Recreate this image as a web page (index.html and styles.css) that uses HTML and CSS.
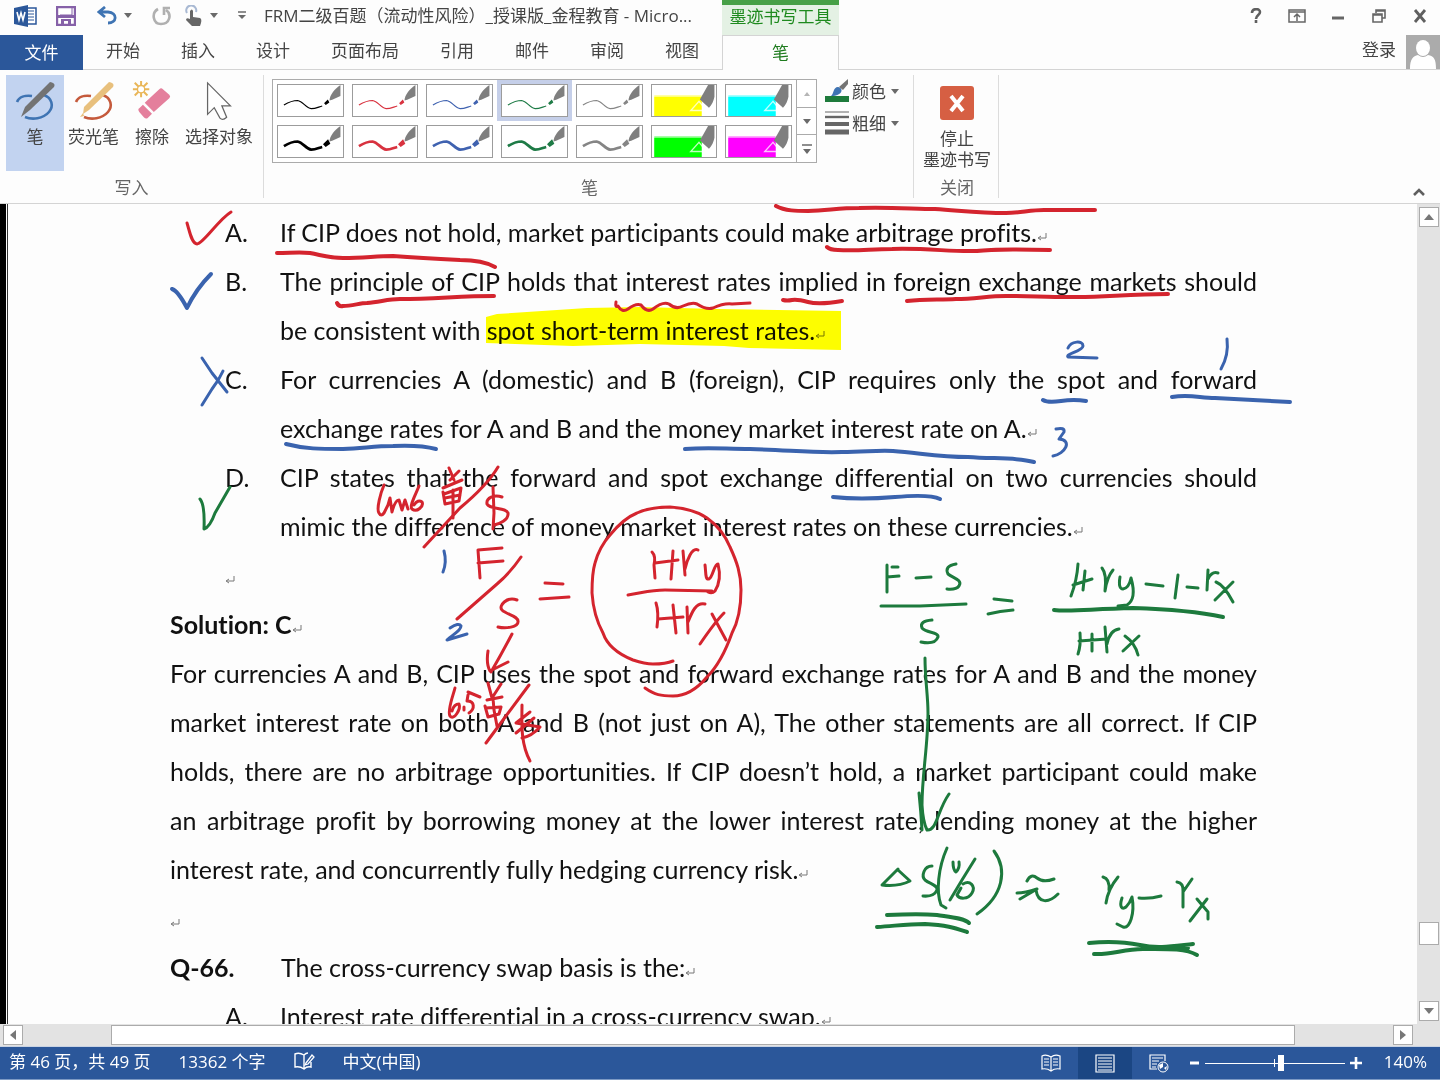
FILE: index.html
```html
<!DOCTYPE html>
<html lang="zh-CN">
<head>
    <meta charset="UTF-8">
    <meta name="viewport" content="width=device-width, initial-scale=1.0">
    <title>FRM二级百题（流动性风险）_授课版_金程教育</title>
    <link rel="stylesheet" href="styles.css">
</head>
<body>
    <!-- Símbolos compartidos -->
    <svg class="defs" aria-hidden="true">
        <symbol id="pen" viewBox="0 0 66 34">
            <path class="wave" d="M4 22C9 19 14 17 19 17C25 18 28 25 34 26C39 26 42 24 46 23"/>
            <path d="M49 20L52 17L53 19L50 21Z" fill="currentColor" stroke="currentColor"/>
            <path d="M54 17C54 11 60 4 66 0V12C62 14 58 16 54 17Z" fill="#7f7f7f"/>
        </symbol>
        <symbol id="marker" viewBox="0 0 66 34">
            <path d="M0 11H52V34H0Z" fill="currentColor" opacity=".35"/>
            <path d="M0 13H52V34H0Z" fill="currentColor"/>
            <path d="M59 0H66V13C65 18 63 22 60 25L50 16Z" fill="#7f7f7f"/>
            <path d="M49 18L40 28H54V24Z" fill="none" stroke="#fff" stroke-opacity=".75" stroke-width="1.5"/>
        </symbol>
        <symbol id="ret" viewBox="0 0 10 10">
            <path d="M9 1V6H2M4 4L1 6L4 8" fill="none" stroke="#777" stroke-width="1"/>
        </symbol>
        <symbol id="down" viewBox="0 0 8 5"><path d="M0 0H8L4 5Z" fill="#6a6a6a"/></symbol>
    </svg>

    <!-- Barra de título -->
    <header class="title-bar">
        <div class="title-left">
            <div class="quick">
                <svg class="word-logo" width="24" height="22" viewBox="0 0 24 22">
                    <path d="M13 3H22V19H13Z" fill="#fff" stroke="#2b579a" stroke-width="1.5"/>
                    <path d="M14 6H20M14 9H20M14 12H20M14 15H20" stroke="#2b579a"/>
                    <path d="M0 3L14 0V22L0 19Z" fill="#2b579a"/>
                    <path d="M3 7L5 15L7 8L9 15L11 7" fill="none" stroke="#fff" stroke-width="1.6"/>
                </svg>
                <button class="save" aria-label="保存"><svg width="20" height="20" viewBox="0 0 20 20"><path d="M1 1H19V19H1Z" fill="#fff" stroke="#8661a8" stroke-width="2.4"/><path d="M4 9H16V2" fill="none" stroke="#8661a8"/><path d="M1 9H19V12H1ZM5 13H15V19H12V15H8V19H5Z" fill="#8661a8"/></svg></button>
                <button class="undo" aria-label="撤消"><svg width="20" height="19" viewBox="0 0 20 19"><path d="M8 1L2 6L8 11M3 6H11C21 7 20 17 11 17" fill="none" stroke="#3f74b3" stroke-width="2.8"/></svg></button>
                <button class="undo-more" aria-label="撤消列表"><svg width="8" height="5"><use href="#down"/></svg></button>
                <button class="redo" aria-label="重复"><svg width="20" height="20" viewBox="0 0 20 20"><path d="M6 3C-1 7 1 18 9 18C18 18 20 8 14 4M12 9V2H18" fill="none" stroke="#b0b0b0" stroke-width="2.6"/></svg></button>
                <button class="touch" aria-label="触摸模式"><svg width="18" height="22" viewBox="0 0 18 22"><path d="M2 8A5 5 0 1 1 11 7" fill="none" stroke="#a9b9d3" stroke-width="2"/><path d="M5 6Q7 3 8 6V12L15 13Q17 14 16 18L15 21H7L1 15Q1 12 5 14Z" fill="#666"/></svg></button>
                <button class="touch-more" aria-label="模式列表"><svg width="8" height="5"><use href="#down"/></svg></button>
                <button class="customize" aria-label="自定义快速访问工具栏"><svg width="8" height="9" viewBox="0 0 8 9"><path d="M0 1H8" stroke="#6a6a6a" stroke-width="1.5"/><path d="M0 4H8L4 8Z" fill="#6a6a6a"/></svg></button>
            </div>
            <h1>FRM二级百题（流动性风险）_授课版_金程教育 - Micro...</h1>
        </div>
        <div class="context-title">墨迹书写工具</div>
        <div class="window-buttons">
            <button aria-label="帮助"><svg width="12" height="16" viewBox="0 0 12 16"><path d="M2 5C2 0 10 0 10 4C10 7 6 7 6 11M6 12V15" fill="none" stroke="#5f5f5f" stroke-width="2.6"/></svg></button>
            <button aria-label="功能区显示选项"><svg width="18" height="14" viewBox="0 0 18 14"><path d="M1 1H17V13H1ZM1 3H17M9 12V6M6 8L9 5L12 8" fill="none" stroke="#666" stroke-width="1.5"/></svg></button>
            <button aria-label="最小化"><svg width="14" height="14" viewBox="0 0 14 14"><path d="M1 9H13" stroke="#666" stroke-width="3"/></svg></button>
            <button aria-label="还原"><svg width="14" height="14" viewBox="0 0 14 14"><path d="M4 4V1H13V9H10M4 2H13M1 5H10V13H1ZM1 6H10" fill="none" stroke="#666" stroke-width="1.6"/></svg></button>
            <button aria-label="关闭"><svg width="14" height="14" viewBox="0 0 14 14"><path d="M2 1L12 13M12 1L2 13" stroke="#5f5f5f" stroke-width="2.8"/></svg></button>
        </div>
    </header>

    <!-- Pestañas -->
    <nav class="tabs">
        <div class="tabs-left">
            <button class="file-tab">文件</button>
            <button>开始</button>
            <button>插入</button>
            <button>设计</button>
            <button>页面布局</button>
            <button>引用</button>
            <button>邮件</button>
            <button>审阅</button>
            <button>视图</button>
        </div>
        <button class="pen-tab">笔</button>
        <div class="account">
            <a href="#">登录</a>
            <svg width="34" height="34" viewBox="0 0 34 34"><path d="M0 0H34V34H0Z" fill="#ababab"/><ellipse cx="17" cy="13" rx="7" ry="8" fill="#fff"/><path d="M4 34C4 24 7 21 12 20Q17 24 22 20C28 21 30 24 30 34Z" fill="#fff"/></svg>
        </div>
    </nav>

    <!-- Cinta de opciones -->
    <section class="ribbon">
        <div class="group">
            <div class="tools">
                <button class="tool active">
                    <svg width="40" height="40" viewBox="0 0 40 40"><path d="M2 21C4 16 10 14 17 15M29 14C37 17 39 25 34 31C28 38 17 39 10 36" fill="none" stroke="#3f74b3" stroke-width="2.6"/><path d="M35 1Q41 2 39 6L15 29L6 36L10 26Z" fill="#737373"/></svg>
                    笔
                </button>
                <button class="tool">
                    <svg width="40" height="40" viewBox="0 0 40 40"><path d="M2 21C4 16 10 14 17 15M29 14C37 17 39 25 34 31C28 38 17 39 10 36" fill="none" stroke="#c55a3c" stroke-width="2.6"/><path d="M35 1Q41 2 39 6L15 29L9 33L10 26Z" fill="#e8c07d"/><path d="M9 32L6 36L10 35Z" fill="#e8c07d"/></svg>
                    荧光笔
                </button>
                <button class="tool">
                    <svg width="44" height="44" viewBox="0 0 44 44"><path d="M10 0V18M1 9H19M3 2L17 16M17 2L3 16" stroke="#e9b658" stroke-width="2.2"/><circle cx="10" cy="9" r="4" fill="#fff" stroke="#e9b658" stroke-width="1.5"/><path d="M14 24L30 9Q32 7 34 9L41 15Q43 17 41 19L24 34Z" fill="#e47f9c"/><path d="M12 26L22 36L17 41Q15 42 13 40L8 34Q6 31 8 30Z" fill="#e47f9c"/></svg>
                    擦除
                </button>
                <button class="tool">
                    <svg width="28" height="42" viewBox="0 0 28 42"><path d="M2 2V35L9 28L15 39Q18 42 22 38L17 26H26Z" fill="#fff" stroke="#666" stroke-width="1.3"/></svg>
                    选择对象
                </button>
            </div>
            <div class="group-name">写入</div>
        </div>
        <div class="group">
            <div class="pens">
                <div class="gallery">
                    <div class="swatches">
                        <button class="black" aria-label="黑色细笔"><svg><use href="#pen"/></svg></button>
                        <button class="red" aria-label="红色细笔"><svg><use href="#pen"/></svg></button>
                        <button class="blue" aria-label="蓝色细笔"><svg><use href="#pen"/></svg></button>
                        <button class="green selected" aria-label="绿色细笔"><svg><use href="#pen"/></svg></button>
                        <button class="gray" aria-label="灰色细笔"><svg><use href="#pen"/></svg></button>
                        <button class="yellow" aria-label="黄色荧光笔"><svg><use href="#marker"/></svg></button>
                        <button class="cyan" aria-label="青色荧光笔"><svg><use href="#marker"/></svg></button>
                        <button class="black thick" aria-label="黑色粗笔"><svg><use href="#pen"/></svg></button>
                        <button class="red thick" aria-label="红色粗笔"><svg><use href="#pen"/></svg></button>
                        <button class="blue thick" aria-label="蓝色粗笔"><svg><use href="#pen"/></svg></button>
                        <button class="green thick" aria-label="绿色粗笔"><svg><use href="#pen"/></svg></button>
                        <button class="gray thick" aria-label="灰色粗笔"><svg><use href="#pen"/></svg></button>
                        <button class="lime" aria-label="绿色荧光笔"><svg><use href="#marker"/></svg></button>
                        <button class="magenta" aria-label="粉色荧光笔"><svg><use href="#marker"/></svg></button>
                    </div>
                    <div class="gallery-scroll">
                        <button aria-label="上一行"><svg width="8" height="5" viewBox="0 0 8 5"><path d="M1 5L4 1L7 5Z" fill="#b5b5b5"/></svg></button>
                        <button aria-label="下一行"><svg width="8" height="5"><use href="#down"/></svg></button>
                        <button aria-label="其他"><svg width="10" height="10" viewBox="0 0 10 10"><path d="M0 1H10" stroke="#6a6a6a" stroke-width="1.5"/><path d="M1 5H9L5 10Z" fill="#6a6a6a"/></svg></button>
                    </div>
                </div>
                <div class="pen-options">
                    <button>
                        <svg width="24" height="24" viewBox="0 0 24 24"><path d="M0 17H24V23H0Z" fill="#1e7b3c"/><path d="M6 17C9 15 8 8 13 8C19 9 18 17 6 17Z" fill="#3f74b3"/><path d="M14 8L23 0V5L18 11Z" fill="#737373"/></svg>
                        颜色
                        <svg width="8" height="5"><use href="#down"/></svg>
                    </button>
                    <button>
                        <svg width="24" height="24" viewBox="0 0 24 24"><path d="M0 1H24" stroke="#666"/><path d="M0 6H24" stroke="#666" stroke-width="2.4"/><path d="M0 13H24" stroke="#666" stroke-width="4"/><path d="M0 21H24" stroke="#666" stroke-width="5"/></svg>
                        粗细
                        <svg width="8" height="5"><use href="#down"/></svg>
                    </button>
                </div>
            </div>
            <div class="group-name">笔</div>
        </div>
        <div class="group">
            <button class="tool stop">
                <svg width="34" height="34" viewBox="0 0 34 34"><rect width="34" height="34" rx="3" fill="#d65f43"/><path d="M11 10L23 25M23 10L11 25" stroke="#fff" stroke-width="4"/></svg>
                停止<br>墨迹书写
            </button>
            <div class="group-name">关闭</div>
        </div>
        <button class="collapse" aria-label="折叠功能区"><svg width="12" height="9" viewBox="0 0 12 9"><path d="M1 8L6 3L11 8" fill="none" stroke="#5f5f5f" stroke-width="2.6"/></svg></button>
    </section>

    <!-- Documento -->
    <main class="workspace">
        <article class="page" lang="en">
            <div class="item"><span>A.</span><p>If CIP does not hold, market participants could make arbitrage profits.<svg class="ret"><use href="#ret"/></svg></p></div>
            <div class="item"><span>B.</span><p><span class="line">The principle of CIP holds that interest rates implied in foreign exchange markets should</span> be consistent with spot short-term interest rates.<svg class="ret"><use href="#ret"/></svg></p></div>
            <div class="item"><span>C.</span><p><span class="line">For currencies A (domestic) and B (foreign), CIP requires only the spot and forward</span> exchange rates for A and B and the money market interest rate on A.<svg class="ret"><use href="#ret"/></svg></p></div>
            <div class="item"><span>D.</span><p><span class="line">CIP states that the forward and spot exchange differential on two currencies should</span> mimic the difference of money market interest rates on these currencies.<svg class="ret"><use href="#ret"/></svg></p></div>
            <div class="item"><span><svg class="ret"><use href="#ret"/></svg></span></div>
            <p><strong>Solution: C</strong><svg class="ret"><use href="#ret"/></svg></p>
            <p>
                <span class="line">For currencies A and B, CIP uses the spot and forward exchange rates for A and B and the money</span>
                <span class="line">market interest rate on both A and B (not just on A), The other statements are all correct. If CIP</span>
                <span class="line">holds, there are no arbitrage opportunities. If CIP doesn’t hold, a market participant could make</span>
                <span class="line">an arbitrage profit by borrowing money at the lower interest rate, lending money at the higher</span>
                interest rate, and concurrently fully hedging currency risk.<svg class="ret"><use href="#ret"/></svg>
            </p>
            <p><svg class="ret"><use href="#ret"/></svg></p>
            <div class="question"><strong>Q-66.</strong><p>The cross-currency swap basis is the:<svg class="ret"><use href="#ret"/></svg></p></div>
            <div class="item"><span>A.</span><p>Interest rate differential in a cross-currency swap.<svg class="ret"><use href="#ret"/></svg></p></div>
        </article>

        <!-- Resaltador -->
        <svg class="ink highlight" width="1440" height="820" viewBox="0 204 1440 820" aria-hidden="true">
            <path d="M486 317L497 314L587 308L640 307L716 309L841 311V350L749 348L724 346L640 344L573 346L486 343Z"/>
        </svg>

        <!-- Trazos a mano sobre la página -->
        <svg class="ink" width="1440" height="820" viewBox="0 204 1440 820" aria-hidden="true">
            <g class="ink-red">
                <path class="wide" d="M776 206C785 211 797 211 808 211C830 210 840 208 859 208C890 207 915 209 935 209C965 211 980 213 1006 213C1020 213 1030 210 1044 210H1095"/>
                <path d="M187 223C190 233 192 244 197 244C204 243 218 220 231 212"/>
                <path class="wide" d="M277 253C290 253 300 252 310 253C325 256 330 258 343 258C365 258 375 256 393 256C420 258 440 259 460 260C475 260 488 263 495 267"/>
                <path class="wide" d="M827 247C830 250 834 250 838 250C860 251 870 249 892 249C930 248 950 252 977 251C990 249 1015 249 1050 250"/>
                <path class="wide" d="M337 303Q339 307 343 306C352 306 360 303 367 303C380 302 388 299 400 299C435 299 460 296 494 296"/>
                <path d="M616 302Q615 308 618 306Q622 313 628 309Q636 303 641 305Q647 313 653 309Q663 301 669 304Q676 310 683 306Q692 302 697 304Q706 310 713 308Q724 303 732 304L750 303"/>
                <path class="wide" d="M783 300Q787 301 792 300T808 302T842 301"/>
                <path class="wide" d="M907 301C925 299 940 300 956 299C975 299 988 296 1006 296C1030 296 1045 297 1069 297C1100 298 1125 294 1168 294"/>
                <path d="M384 485C381 492 376 509 379 513Q381 517 384 513L388 505L390 498L392 512Q395 500 399 500L402 510L405 500L408 509M419 486C416 494 409 506 412 509C417 513 424 506 422 502Q418 499 414 505"/>
                <path d="M449 468L454 480M459 471L450 480M443 488L462 480M443 492L445 504L459 501L461 488L444 494M445 498L460 495M453 490V518"/>
                <path d="M498 467C488 484 472 498 460 508L424 547M502 497C494 494 486 498 487 504C490 510 506 507 508 513C509 520 499 524 494 525M493 487L494 513L493 529"/>
                <path d="M478 550L480 578M478 550L502 548M478 563L503 561M521 557Q510 573 497 584L457 619M517 600C507 596 498 606 502 610C507 615 519 616 518 622C518 627 506 629 498 627"/>
                <path d="M512 634Q501 655 491 672M488 651Q486 664 490 671L508 662"/>
                <path d="M455 688C453 696 447 711 450 716C454 721 461 709 459 704Q454 704 452 711M464 710V707M468 692L480 697M468 695L467 701C475 701 475 709 469 713"/>
                <path d="M488 683L492 698L501 684M487 700L502 697M485 706L488 717L499 714L501 707L486 708M493 698L494 710L497 726M529 685L503 720L486 743"/>
                <path d="M522 705C522 722 520 742 530 761M530 712L516 723L540 727Q532 736 522 738M534 718L516 733"/>
                <path d="M545 583L563 584M540 599L569 597M628 595C642 593 650 590 665 590L712 591"/>
                <path d="M673 661C666 664 660 664 653 664C646 664 639 662 633 660C618 654 607 645 603 633C597 622 593 608 592 593C592 581 592 573 595 563C598 552 602 544 610 535C619 524 627 517 637 513C648 508 659 507 670 507C684 508 697 511 707 518C717 525 725 535 730 547C737 562 741 574 741 590C741 606 739 620 732 633C726 650 718 666 707 677C697 689 686 696 673 696C661 696 655 695 645 688"/>
                <path d="M652 552Q656 556 654 565L655 578M655 563L678 560M673 551L671 579M683 551L685 575M685 569C687 560 692 547 698 550M705 565C706 572 705 580 709 579C713 577 714 564 718 564Q722 580 715 591Q712 594 708 592"/>
                <path d="M656 603Q659 612 657 627M658 619L683 617M673 605L676 633M687 607L688 633M688 622C692 612 696 602 705 604M712 614L726 640M724 613Q715 622 700 644"/>
            </g>
            <g class="ink-blue">
                <path class="wide" d="M172 289Q178 291 187 308Q196 289 211 274"/>
                <path d="M202 358L212 373L227 392M223 371Q219 380 212 389L202 405"/>
                <path d="M1068 348C1071 341 1083 340 1083 346C1083 351 1065 354 1068 357L1097 358M1227 339Q1229 355 1221 369"/>
                <path class="wide" d="M1043 400Q1048 403 1061 401T1086 401M1172 397C1190 394 1200 398 1215 398L1290 402"/>
                <path class="wide" d="M286 444C305 449 320 449 343 449C365 448 375 446 393 446C415 445 425 446 436 449"/>
                <path class="wide" d="M685 449C710 447 725 449 750 449C790 450 810 453 842 452C865 452 878 450 893 451C920 453 940 457 968 457C995 459 1015 457 1034 462"/>
                <path d="M1056 429Q1065 427 1064 432L1059 439C1073 440 1065 454 1053 456"/>
                <path class="wide" d="M833 497Q860 500 895 497T940 499"/>
                <path d="M444 551Q447 562 443 572M450 628Q459 622 461 626C461 631 452 635 447 640L467 634"/>
            </g>
            <g class="ink-green">
                <path d="M200 499Q205 505 204 529Q210 527 215 513L230 487"/>
                <path d="M887 565V592M892 567H898M887 577L899 576M916 578L931 577M956 564Q944 566 948 574C953 578 963 580 959 586Q956 590 947 589"/>
                <path d="M881 606H920L966 604M932 620Q919 621 922 628C926 633 939 632 938 637Q935 645 921 642M994 599L1012 601M988 614Q1000 611 1013 610"/>
                <path d="M1078 564Q1077 580 1071 596M1073 585L1092 579M1085 571L1083 590M1102 568Q1107 574 1105 591Q1107 577 1113 570M1120 577Q1118 589 1123 589Q1129 588 1131 578Q1137 599 1127 605L1118 606"/>
                <path d="M1146 584L1163 586M1178 575L1175 598M1187 587L1198 588M1208 570L1207 590M1208 579Q1212 571 1218 573M1216 582Q1224 585 1233 602M1233 582L1215 600"/>
                <path class="wide" d="M1054 610C1070 612 1090 609 1133 608C1165 609 1195 611 1223 617"/>
                <path d="M1080 633Q1081 645 1078 654M1079 641L1107 639M1092 634V651M1105 627L1107 652M1107 644Q1110 630 1119 629M1125 636Q1135 643 1138 655M1139 636L1123 651"/>
                <path d="M925 658C925 680 928 695 928 713C928 745 922 775 922 805Q923 822 927 830M919 793Q921 812 922 830M927 830C937 831 937 811 949 794"/>
                <path d="M898 869L882 885Q898 887 910 881L898 870M932 866C924 866 921 876 925 880C930 884 938 885 937 890Q934 897 923 896M947 848C938 868 936 892 941 905L946 908"/>
                <path d="M953 862Q953 870 956 872Q960 868 959 862M975 859L962 880L950 900M963 884C970 880 976 886 972 893C968 900 959 899 957 895L961 888M994 851C1008 870 1003 896 977 914"/>
                <path class="wide" d="M887 915C910 914 925 914 937 915C950 917 964 918 969 923M877 927C895 926 905 924 925 924C947 925 955 928 967 932"/>
                <path d="M1027 881Q1031 873 1037 878T1054 879M1017 893Q1025 893 1037 889L1020 899M1036 890C1038 904 1049 903 1058 894"/>
                <path d="M1103 877Q1110 879 1109 890M1118 877Q1108 889 1106 903M1122 898C1119 907 1122 910 1126 907Q1130 903 1132 897C1135 913 1130 929 1123 927L1117 924M1139 898Q1150 899 1161 896M1177 882Q1184 883 1183 892M1192 879L1183 892V907M1197 899Q1202 905 1208 912V919M1207 899L1190 921"/>
                <path class="wide" d="M1089 943C1110 941 1125 942 1140 945C1158 949 1174 946 1193 944M1094 954C1112 955 1123 949 1143 949C1165 949 1185 948 1197 955M1150 948H1188"/>
            </g>
        </svg>

        <div class="v-scroll">
            <button aria-label="向上滚动"><svg width="10" height="6" viewBox="0 0 10 6"><path d="M0 6L5 0L10 6Z" fill="#777"/></svg></button>
            <div class="v-track"><div class="v-thumb"></div></div>
            <button aria-label="向下滚动"><svg width="10" height="6" viewBox="0 0 10 6"><path d="M0 0H10L5 6Z" fill="#777"/></svg></button>
        </div>
    </main>

    <div class="h-scroll">
        <button aria-label="向左滚动"><svg width="6" height="10" viewBox="0 0 6 10"><path d="M6 0L0 5L6 10Z" fill="#777"/></svg></button>
        <div class="h-track"><div class="h-thumb"></div></div>
        <button aria-label="向右滚动"><svg width="6" height="10" viewBox="0 0 6 10"><path d="M0 0L6 5L0 10Z" fill="#777"/></svg></button>
    </div>

    <!-- Barra de estado -->
    <footer class="status">
        <div class="status-left">
            <span>第 46 页，共 49 页</span>
            <span>13362 个字</span>
            <svg width="21" height="18" viewBox="0 0 21 18"><path d="M10 3Q5 0 1 2V15Q6 14 10 17Q13 14 17 15V10M10 3V17M10 3Q12 1 14 1" fill="none" stroke="#fff" stroke-width="1.4"/><path d="M12 11L18 3L20 5L14 12L11 13Z" fill="none" stroke="#fff" stroke-width="1.3"/></svg>
            <span>中文(中国)</span>
        </div>
        <div class="status-right">
            <button aria-label="阅读视图"><svg width="20" height="18" viewBox="0 0 20 18"><path d="M10 3Q5 0 1 2V15Q6 14 10 17Q14 14 19 15V2Q14 0 10 3V17M3 5H8M3 8H8M3 11H8M12 5H17M12 8H17M12 11H17" fill="none" stroke="#fff" stroke-width="1.2"/></svg></button>
            <button class="current" aria-label="页面视图"><svg width="20" height="19" viewBox="0 0 20 19"><path d="M1 1H19V18H1ZM3 4H17M3 7H17M3 10H17M3 13H17M3 16H17" fill="none" stroke="#fff" stroke-width="1.2"/></svg></button>
            <button aria-label="Web 版式视图"><svg width="20" height="19" viewBox="0 0 20 19"><path d="M8 15H1V1H16V7M3 4H14M3 7H10M3 10H8M3 13H7" fill="none" stroke="#fff" stroke-width="1.2"/><circle cx="14" cy="13" r="5" fill="none" stroke="#fff"/><path d="M10 11L14 9L14 13L11 15ZM15 14L18 12L17 16Z" fill="#fff"/></svg></button>
            <div class="zoom">
                <button aria-label="缩小"><svg width="10" height="12" viewBox="0 0 10 12"><path d="M0 6H9" stroke="#fff" stroke-width="3"/></svg></button>
                <input type="range" min="0" max="100" value="55" aria-label="显示比例">
                <button aria-label="放大"><svg width="12" height="12" viewBox="0 0 12 12"><path d="M0 6H12M6 0V12" stroke="#fff" stroke-width="2.6"/></svg></button>
            </div>
            <button class="percent">140%</button>
        </div>
    </footer>
</body>
</html>
```
FILE: styles.css
```css
* {
    box-sizing: border-box;
}
body {
    margin: 0;
    height: 100vh;
    display: flex;
    flex-direction: column;
    overflow: hidden;
    background-color: #fdfdfd;
    color: #444;
    font-family: "Open Sans", "Noto Sans CJK SC", sans-serif;
    font-size: 17px;
    line-height: 21px;
}
button {
    margin: 0;
    padding: 0;
    border: none;
    background: none;
    color: inherit;
    font: inherit;
    cursor: pointer;
}
svg {
    display: block;
    flex: none;
}
.defs {
    display: none;
}

/* Barra de título */
.title-bar {
    display: flex;
    height: 35px;
}
.title-left {
    flex: 0 0 722px;
    display: flex;
    align-items: center;
    padding: 0 0 4px 14px;
}
.quick {
    flex: 0 0 250px;
    display: flex;
    align-items: center;
}
.save {
    margin-left: 18px;
}
.undo {
    margin-left: 21px;
}
.undo-more,
.touch-more {
    margin-left: 7px;
}
.redo {
    margin-left: 20px;
}
.touch {
    margin-left: 13px;
}
.customize {
    margin-left: 20px;
}
.title-bar h1 {
    margin: 0;
    font-size: 17px;
    font-weight: 400;
    white-space: nowrap;
}
.context-title {
    flex: 0 0 117px;
    border-top: 5px solid #47a047;
    background-color: #e4f1e4;
    color: #1e8a1e;
    text-align: center;
    line-height: 24px;
}
.window-buttons {
    display: flex;
    align-items: center;
    margin-left: auto;
    padding-bottom: 3px;
}
.window-buttons button {
    width: 41px;
    display: flex;
    justify-content: center;
}

/* Pestañas */
.tabs {
    display: flex;
    height: 35px;
    line-height: 32px;
}
.tabs-left {
    flex: 0 0 722px;
    display: flex;
    gap: 41px;
    border-bottom: 1px solid #d4d4d4;
}
.tabs-left button {
    height: 32px;
    white-space: nowrap;
}
.tabs-left .file-tab {
    width: 83px;
    height: 35px;
    margin-right: -18px;
    background-color: #2b579a;
    color: #fff;
}
.pen-tab {
    flex: 0 0 117px;
    border: 1px solid #d4d4d4;
    border-bottom: none;
    color: #1e7b1e;
}
.account {
    flex: 1;
    display: flex;
    justify-content: flex-end;
    gap: 10px;
    border-bottom: 1px solid #d4d4d4;
}
.account a {
    color: #444;
    text-decoration: none;
    line-height: 30px;
}

/* Cinta */
.ribbon {
    display: flex;
    height: 134px;
    padding: 5px 0 5px 6px;
    border-bottom: 1px solid #d4d4d4;
}
.group {
    display: flex;
    flex-direction: column;
    justify-content: space-between;
    padding-right: 6px;
    border-right: 1px solid #dcdcdc;
}
.group + .group {
    padding-left: 8px;
}
.group-name {
    text-align: center;
    color: #666;
}
.tools {
    display: flex;
}
.tool {
    min-width: 58px;
    height: 96px;
    display: flex;
    flex-direction: column;
    align-items: center;
    padding: 6px 4px 0;
    white-space: nowrap;
}
.tool svg {
    height: 40px;
    margin-bottom: 5px;
}
.tool.active {
    background-color: #c2d3f0;
}
.stop {
    display: block;
    padding: 9px 0 0;
    min-width: 70px;
}
.stop svg {
    height: 34px;
    margin: 0 auto 8px;
}
.pens {
    display: flex;
    gap: 8px;
    padding: 4px 8px 0 0;
}
.gallery {
    width: 545px;
    height: 84px;
    display: flex;
    border: 1px solid #ababab;
    background-color: #fff;
}
.swatches {
    flex: 1;
    display: grid;
    grid-template-columns: repeat(7, 1fr);
}
.swatches button {
    height: 41px;
    padding: 4px;
    stroke-width: 1.3;
}
.swatches svg {
    width: 100%;
    height: 33px;
    border: 1px solid #9c9c9c;
    background-color: #fff;
}
.swatches .selected {
    background-color: #c5cfe9;
}
.swatches .thick {
    stroke-width: 3;
}
.wave {
    fill: none;
    stroke: currentColor;
    stroke-width: inherit;
}
.black { color: #000; }
.red { color: #d8323f; }
.blue { color: #3f62b0; }
.green { color: #1e7b46; }
.gray { color: #858585; }
.yellow { color: #ffff00; }
.cyan { color: #00ffff; }
.lime { color: #00ff00; }
.magenta { color: #ff00ff; }
.gallery-scroll {
    flex: 0 0 20px;
    display: flex;
    flex-direction: column;
    border-left: 1px solid #ababab;
}
.gallery-scroll button {
    flex: 1;
    display: flex;
    align-items: center;
    justify-content: center;
}
.gallery-scroll button + button {
    border-top: 1px solid #ababab;
}
.pen-options {
    display: flex;
    flex-direction: column;
    gap: 8px;
}
.pen-options button {
    display: flex;
    align-items: center;
    gap: 3px;
    height: 24px;
}
.pen-options button svg:last-child {
    margin-left: 2px;
}
.collapse {
    align-self: flex-end;
    margin-left: auto;
    padding: 0 15px 2px;
}

/* Documento */
.workspace {
    position: relative;
    flex: 1;
    min-height: 0;
    display: flex;
    overflow: hidden;
    border-left: 6px solid #000;
}
.page {
    flex: 1;
    margin-left: 1px;
    padding: 4px 160px 0 162px;
    border-left: 1px solid #333;
    color: #111;
    font-family: Lato, "Open Sans", sans-serif;
    font-size: 25px;
    font-variant-ligatures: none;
    line-height: 49px;
}
.page p {
    margin: 0;
}
.item {
    display: grid;
    grid-template-columns: 55px 1fr;
    padding-left: 55px;
}
.question {
    display: grid;
    grid-template-columns: 111px 1fr;
}
.line {
    display: block;
    text-align: justify;
    text-align-last: justify;
}
.ret {
    display: inline-block;
    width: 10px;
    height: 10px;
}
.ink {
    position: absolute;
    top: 0;
    left: -6px;
    pointer-events: none;
}
.ink path {
    fill: none;
    stroke-width: 3;
    stroke-linecap: round;
    stroke-linejoin: round;
}
.ink .wide {
    stroke-width: 4;
}
.highlight {
    mix-blend-mode: multiply;
}
.highlight path {
    fill: #ffff00;
}
.ink-red { stroke: #d4242e; }
.ink-blue { stroke: #3a63ae; }
.ink-green { stroke: #1d7a3d; }

/* Barras de desplazamiento */
.v-scroll {
    flex: 0 0 23px;
    display: flex;
    flex-direction: column;
    align-items: center;
    padding: 3px 1px;
    background-color: #e3e3e3;
}
.v-scroll button,
.h-scroll button {
    flex: 0 0 20px;
    width: 20px;
    height: 20px;
    display: flex;
    align-items: center;
    justify-content: center;
    border: 1px solid #ababab;
    background-color: #fff;
}
.v-track {
    flex: 1;
    display: flex;
    flex-direction: column;
}
.v-track::before {
    content: "";
    flex: 696;
}
.v-track::after {
    content: "";
    flex: 56;
}
.v-thumb {
    width: 20px;
    height: 23px;
    border: 1px solid #ababab;
    background-color: #fff;
}
.h-scroll {
    height: 23px;
    display: flex;
    align-items: center;
    padding: 0 27px 0 3px;
    border-bottom: 1px solid #c9d3e3;
    background-color: #e3e3e3;
}
.h-track {
    flex: 1;
    display: flex;
}
.h-track::before {
    content: "";
    flex: 88;
}
.h-track::after {
    content: "";
    flex: 98;
}
.h-thumb {
    flex: 1184;
    height: 20px;
    border: 1px solid #ababab;
    background-color: #fff;
}

/* Barra de estado */
.status {
    height: 33px;
    display: flex;
    justify-content: space-between;
    padding: 0 13px 0 9px;
    border-bottom: 1px solid #7d9ac4;
    background-color: #2b579a;
    color: #fff;
}
.status-left {
    display: flex;
    align-items: center;
    gap: 28px;
    padding-bottom: 4px;
}
.status-right {
    display: flex;
    align-items: stretch;
}
.status-right button {
    display: flex;
    align-items: center;
    justify-content: center;
}
.status-right > button {
    width: 54px;
}
.current {
    background-color: #1b4683;
}
.zoom {
    display: flex;
    align-items: center;
    gap: 5px;
    margin-left: 4px;
}
.zoom input {
    -webkit-appearance: none;
    appearance: none;
    width: 140px;
    height: 16px;
    margin: 0;
    background: linear-gradient(#fff, #fff) center / 1px 8px no-repeat,
                linear-gradient(#fff, #fff) center / 100% 1px no-repeat;
}
.zoom input::-webkit-slider-thumb {
    -webkit-appearance: none;
    width: 6px;
    height: 16px;
    background-color: #fff;
}
.status-right .percent {
    justify-content: flex-end;
    width: auto;
    margin-left: 22px;
    padding-bottom: 4px;
}
```
